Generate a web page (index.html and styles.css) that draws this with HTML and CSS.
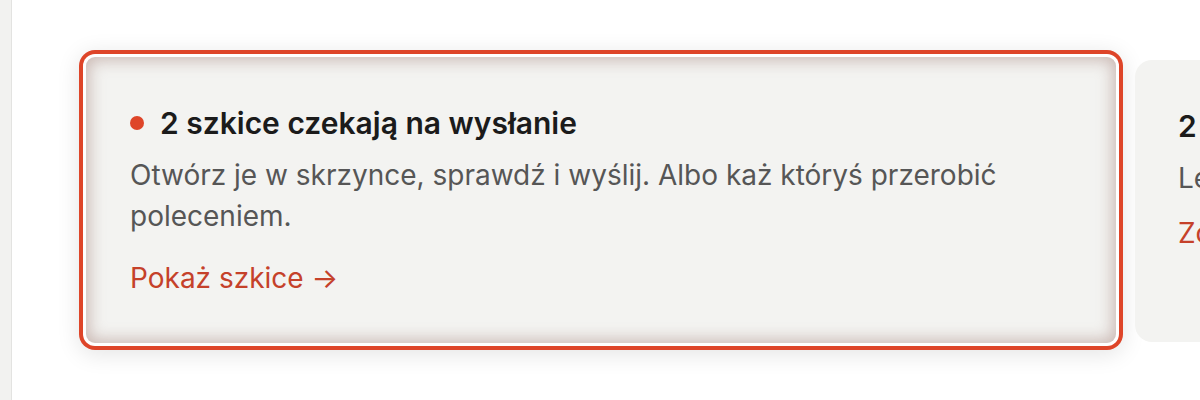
FILE: index.html
```html
<!DOCTYPE html>
<html lang="pl">
<head>
<meta charset="utf-8">
<title>Szkice</title>
<link rel="stylesheet" href="styles.css">
</head>
<body>
<aside class="sidebar"></aside>
<main class="main">
  <div class="row">
    <section class="card card--active">
      <h2 class="card-title"><span class="dot"></span>2 szkice czekają na wysłanie</h2>
      <p class="card-text">Otwórz je w skrzynce, sprawdź i wyślij. Albo każ któryś przerobić poleceniem.</p>
      <a class="card-link" href="#">Pokaż szkice →</a>
    </section>
    <section class="card card--side">
      <h2 class="card-title">2 odpowiedzi czekają na Ciebie</h2>
      <p class="card-text">Leżą w skrzynce od wczoraj.</p>
      <a class="card-link" href="#">Zobacz odpowiedzi →</a>
    </section>
  </div>
</main>
</body>
</html>
```
FILE: styles.css
```css
html, body {
  margin: 0;
  padding: 0;
  height: 100%;
  background: #ffffff;
  font-family: Inter, "Noto Sans", sans-serif;
  overflow: hidden;
}
body {
  display: flex;
  width: 1200px;
  height: 400px;
}
.sidebar {
  flex: 0 0 11px;
  background: #f2f2f0;
  border-right: 1px solid #e3e3e1;
}
.main {
  flex: 1;
  min-width: 0;
  padding-left: 74px;
  display: flex;
  align-items: center;
  overflow: hidden;
}
.row {
  display: flex;
  align-items: center;
  gap: 19px;
}
.card {
  box-sizing: border-box;
  background: #f3f3f1;
  padding: 48px 44px 44px 44px;
  flex: 0 0 auto;
}
.card--active {
  width: 1030px;
  border-radius: 9px;
  box-shadow:
    0 0 0 3px #ffffff,
    0 0 0 7px #de4529,
    0 4px 22px 8px rgba(0, 0, 0, 0.10),
    inset 0 0 16px 3px rgba(140, 95, 85, 0.40);
}
.card--side {
  width: 400px;
  border-radius: 17px;
  align-self: stretch;
  margin: 3px 0 1px 0;
  padding-left: 43px;
}
.card-title {
  margin: 0;
  font-size: 30px;
  line-height: 36px;
  font-weight: 600;
  color: #1b1b1b;
  display: flex;
  align-items: center;
  white-space: nowrap;
}
.dot {
  width: 14px;
  height: 14px;
  border-radius: 50%;
  background: #de4529;
  margin-right: 16px;
  flex: 0 0 auto;
}
.card-text {
  margin: 14px 0 0 0;
  font-size: 28px;
  line-height: 41px;
  color: #565656;
}
.card--side .card-text {
  white-space: nowrap;
}
.card-link {
  display: block;
  margin-top: 20.7px;
  font-size: 28px;
  line-height: 41px;
  color: #c5412a;
  text-decoration: none;
  white-space: nowrap;
}
.card--side .card-link {
  margin-top: 14px;
}
```
